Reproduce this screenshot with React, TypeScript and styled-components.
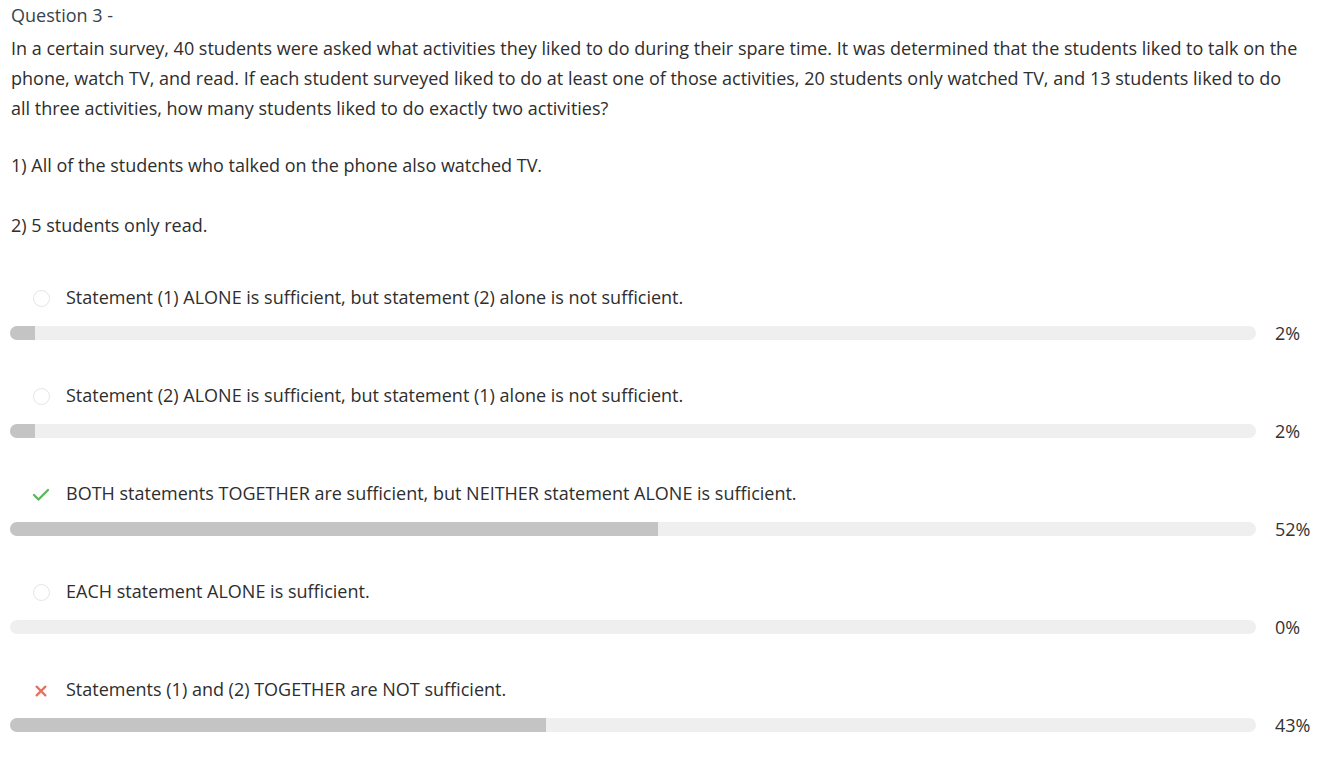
import React from "react";
import styled, { createGlobalStyle } from "styled-components";

const Global = createGlobalStyle`
  html, body { margin: 0; padding: 0; background: #ffffff; }
  body { font-family: "Open Sans", "Liberation Sans", sans-serif; color: #333333; }
`;

const Page = styled.div`
  padding: 0 10px 0 11px;
  width: 1334px;
  box-sizing: border-box;
`;

const Title = styled.div`
  font-size: 18px;
  line-height: 30px;
  color: #37444d;
`;

const Text = styled.p<{ $mt: number }>`
  margin: ${(p) => p.$mt}px 0 0;
  max-width: 1290px;
  font-size: 18px;
  line-height: 30px;
  color: #2e2e2e;
`;

const Options = styled.div`
  margin-top: 42px;
  margin-left: -1px;
  display: flex;
  flex-direction: column;
  gap: 40px;
`;

const Option = styled.div`
  display: flex;
  flex-direction: column;
`;

const Label = styled.div`
  display: flex;
  align-items: center;
  height: 30px;
  padding-left: 19px;
  gap: 13px;
  font-size: 18px;
  color: #2e2e2e;
`;

const IconBox = styled.span`
  width: 24px;
  height: 24px;
  display: flex;
  align-items: center;
  justify-content: center;
  flex: none;
`;

const Radio = styled.span`
  width: 17px;
  height: 17px;
  box-sizing: border-box;
  border-radius: 50%;
  border: 1.5px solid #e4e4e4;
  margin-top: 2px;
`;

const BarRow = styled.div`
  margin-top: 14px;
  display: flex;
  align-items: center;
  height: 14px;
`;

const Track = styled.div`
  flex: 1;
  height: 14px;
  border-radius: 7px;
  background: #efefef;
  overflow: hidden;
`;

const Fill = styled.div`
  height: 100%;
  background: #c4c4c4;
`;

const Pct = styled.span`
  width: 68px;
  flex: none;
  padding-left: 19px;
  box-sizing: border-box;
  font-size: 18px;
  color: #333333;
`;

type Status = "none" | "correct" | "wrong";

const options: { text: string; pct: number; status: Status }[] = [
  { text: "Statement (1) ALONE is sufficient, but statement (2) alone is not sufficient.", pct: 2, status: "none" },
  { text: "Statement (2) ALONE is sufficient, but statement (1) alone is not sufficient.", pct: 2, status: "none" },
  { text: "BOTH statements TOGETHER are sufficient, but NEITHER statement ALONE is sufficient.", pct: 52, status: "correct" },
  { text: "EACH statement ALONE is sufficient.", pct: 0, status: "none" },
  { text: "Statements (1) and (2) TOGETHER are NOT sufficient.", pct: 43, status: "wrong" },
];

const Icon = ({ status }: { status: Status }) => {
  if (status === "correct")
    return (
      <svg width="18" height="18" viewBox="0 0 18 18" style={{ marginTop: 2 }}>
        <polyline points="2,10 6.5,14.5 16,5" fill="none" stroke="#5cb85c" strokeWidth="2.4" strokeLinecap="round" strokeLinejoin="round" />
      </svg>
    );
  if (status === "wrong")
    return (
      <svg width="14" height="14" viewBox="0 0 16 16" style={{ marginTop: 4 }}>
        <path d="M3 3 L13 13 M13 3 L3 13" stroke="#e5735f" strokeWidth="2.6" strokeLinecap="round" />
      </svg>
    );
  return <Radio />;
};

export default function App() {
  return (
    <Page>
      <Global />
      <Title>Question 3 -</Title>
      <Text $mt={3}>
        In a certain survey, 40 students were asked what activities they liked to do during their spare time. It was determined that the students liked to talk on the phone, watch TV, and read. If each student surveyed liked to do at least one of those activities, 20 students only watched TV, and 13 students liked to do all three activities, how many students liked to do exactly two activities?
      </Text>
      <Text $mt={27}>1) All of the students who talked on the phone also watched TV.</Text>
      <Text $mt={30}>2) 5 students only read.</Text>
      <Options>
        {options.map((o, i) => (
          <Option key={i}>
            <Label>
              <IconBox>
                <Icon status={o.status} />
              </IconBox>
              {o.text}
            </Label>
            <BarRow>
              <Track>
                <Fill style={{ width: `${o.pct}%` }} />
              </Track>
              <Pct>{o.pct}%</Pct>
            </BarRow>
          </Option>
        ))}
      </Options>
    </Page>
  );
}
